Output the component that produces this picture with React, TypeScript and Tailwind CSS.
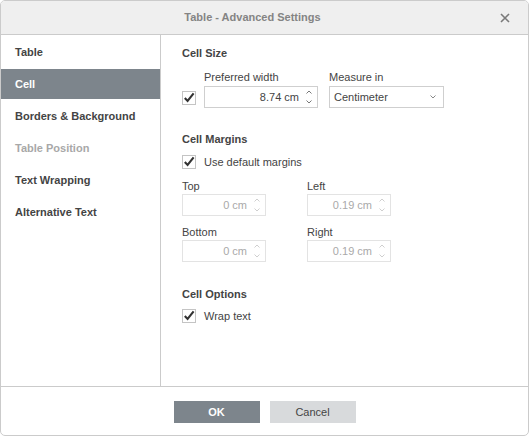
import React from 'react';

const Check = () => (
  <span className="w-[14px] h-[14px] border border-[#c4c4c4] bg-white flex items-center justify-center shrink-0">
    <svg width="12" height="12" viewBox="0 0 12 12">
      <path d="M1.8 6 L4.6 9 L10.6 1.4" fill="none" stroke="#333" strokeWidth="2.1" />
    </svg>
  </span>
);

const Spin = ({ disabled }: { disabled?: boolean }) => (
  <span className="flex flex-col items-center gap-[6px] pr-[5px] pl-[7px]">
    <svg width="6" height="4" viewBox="0 0 6 4">
      <path d="M0.5 3.5 L3 1 L5.5 3.5" fill="none" stroke={disabled ? '#cfcfcf' : '#777'} strokeWidth="1" />
    </svg>
    <svg width="6" height="4" viewBox="0 0 6 4">
      <path d="M0.5 0.5 L3 3 L5.5 0.5" fill="none" stroke={disabled ? '#cfcfcf' : '#777'} strokeWidth="1" />
    </svg>
  </span>
);

const SpinInput = ({ value, width, disabled }: { value: string; width: string; disabled?: boolean }) => (
  <div
    className={`${width} h-[22px] flex items-center justify-end border ${
      disabled ? 'border-[#e3e3e3] text-[#a9a9a9]' : 'border-[#cfcfcf] text-[#444]'
    }`}
  >
    <span>{value}</span>
    <Spin disabled={disabled} />
  </div>
);

const Header = ({ children, className }: { children: React.ReactNode; className: string }) => (
  <div className={`font-bold leading-[14px] text-[#444] ${className}`}>{children}</div>
);

export default function App() {
  const nav = [
    { label: 'Table' },
    { label: 'Cell', active: true },
    { label: 'Borders & Background' },
    { label: 'Table Position', disabled: true },
    { label: 'Text Wrapping' },
    { label: 'Alternative Text' },
  ];

  return (
    <div
      className="w-[529px] h-[436px] bg-white border border-[#cbcbcb] rounded-[5px] flex flex-col overflow-hidden text-[11px] text-[#444]"
      style={{ fontFamily: '"Liberation Sans", Arial, sans-serif' }}
    >
      <div className="h-[34px] shrink-0 bg-[#efefef] border-b border-[#cbcbcb] flex items-center relative">
        <div className="flex-1 text-center font-bold text-[#848484] pr-[24px]">Table - Advanced Settings</div>
        <svg className="absolute right-[18px] top-[12px]" width="10" height="10" viewBox="0 0 10 10">
          <path d="M1 1 L9 9 M9 1 L1 9" stroke="#7a7a7a" strokeWidth="1.6" />
        </svg>
      </div>

      <div className="flex flex-1 min-h-0">
        <div className="w-[160px] shrink-0 border-r border-[#cbcbcb] pt-[2px] flex flex-col gap-[2px]">
          {nav.map((item) => (
            <div
              key={item.label}
              className={`h-[30px] flex items-center pl-[14px] font-bold ${
                item.active ? 'bg-[#7d858c] text-white' : item.disabled ? 'text-[#a8a8a8]' : 'text-[#444]'
              }`}
            >
              {item.label}
            </div>
          ))}
        </div>

        <div className="flex-1 pl-[21px] pt-[11px]">
          <Header className="">Cell Size</Header>
          <div className="grid grid-cols-[22px_114px_126px] mt-[10px] items-center">
            <div />
            <div className="leading-[14px]">Preferred width</div>
            <div className="leading-[14px] pl-[11px]">Measure in</div>
            <div className="mt-[2px] pt-[1px]">
              <Check />
            </div>
            <div className="mt-[2px]">
              <SpinInput value="8.74 cm" width="w-[114px]" />
            </div>
            <div className="mt-[2px] pl-[11px]">
              <div className="w-[115px] h-[22px] border border-[#cfcfcf] flex items-center justify-between pl-[4px] pr-[7px]">
                <span>Centimeter</span>
                <svg width="6" height="4" viewBox="0 0 6 4">
                  <path d="M0.5 0.5 L3 3 L5.5 0.5" fill="none" stroke="#888" strokeWidth="1" />
                </svg>
              </div>
            </div>
          </div>

          <Header className="mt-[24px]">Cell Margins</Header>
          <div className="flex items-center gap-[8px] mt-[9px] leading-[14px]">
            <Check />
            <span>Use default margins</span>
          </div>

          <div className="grid grid-cols-[125px_84px] mt-[10px]">
            <div className="leading-[14px]">Top</div>
            <div className="leading-[14px]">Left</div>
            <div className="mt-[1px]">
              <SpinInput value="0 cm" width="w-[84px]" disabled />
            </div>
            <div className="mt-[1px]">
              <SpinInput value="0.19 cm" width="w-[84px]" disabled />
            </div>
            <div className="leading-[14px] mt-[9px]">Bottom</div>
            <div className="leading-[14px] mt-[9px]">Right</div>
            <div className="mt-[1px]">
              <SpinInput value="0 cm" width="w-[84px]" disabled />
            </div>
            <div className="mt-[1px]">
              <SpinInput value="0.19 cm" width="w-[84px]" disabled />
            </div>
          </div>

          <Header className="mt-[25px]">Cell Options</Header>
          <div className="flex items-center gap-[8px] mt-[8px] leading-[14px]">
            <Check />
            <span>Wrap text</span>
          </div>
        </div>
      </div>

      <div className="h-[49px] shrink-0 border-t border-[#cbcbcb] flex items-start justify-center gap-[10px] pt-[14px]">
        <button className="w-[86px] h-[22px] bg-[#7d858c] text-white font-bold">OK</button>
        <button className="w-[86px] h-[22px] bg-[#d8dadc] text-[#444]">Cancel</button>
      </div>
    </div>
  );
}
